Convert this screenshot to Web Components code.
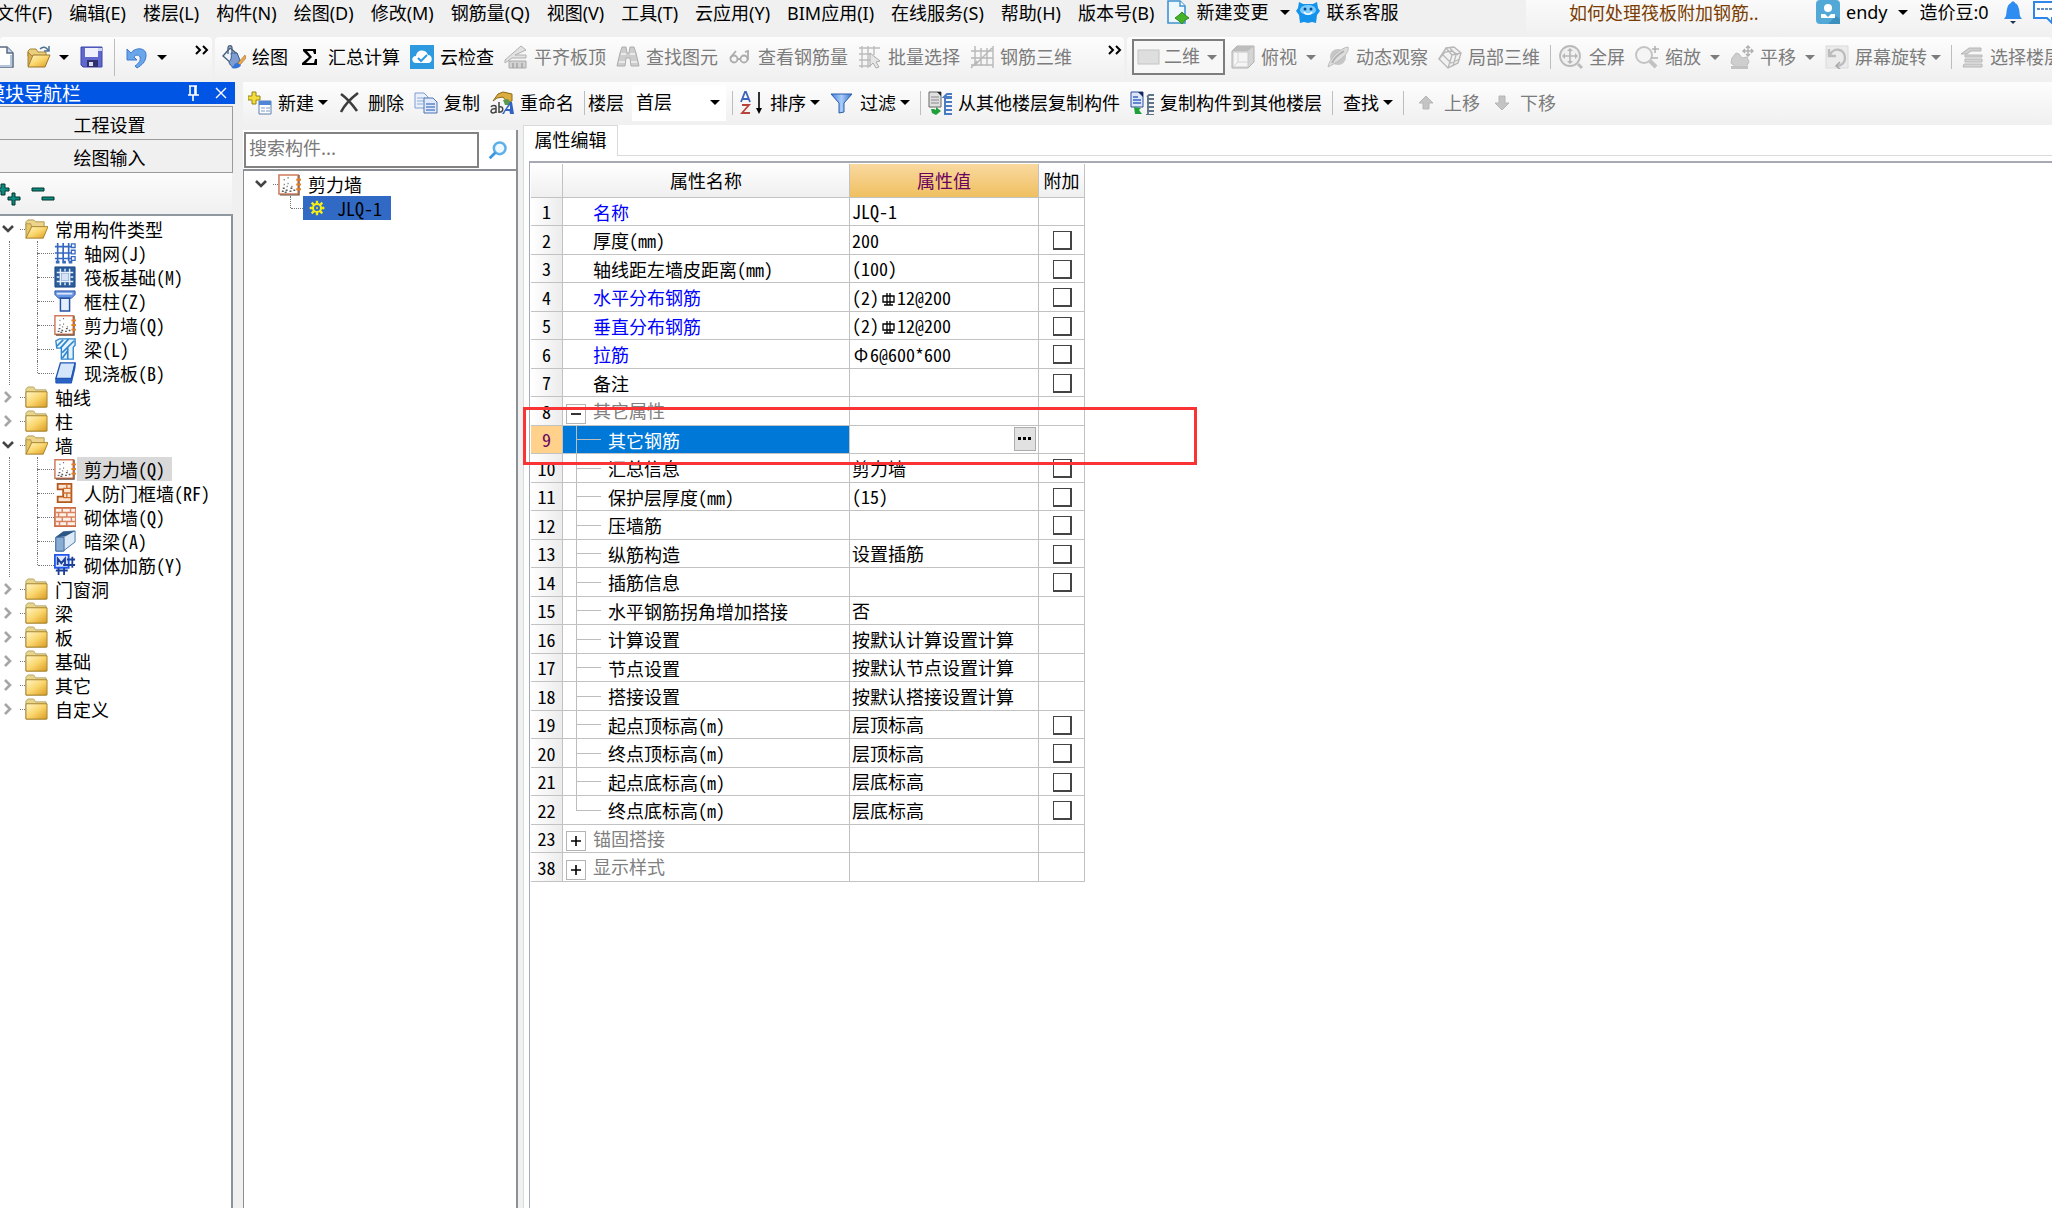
<!DOCTYPE html>
<html lang="zh-CN">
<head>
<meta charset="utf-8">
<title>属性编辑</title>
<style>
  html, body { margin: 0; height: 100%; overflow: hidden; background: #f0f0f0; }
  body { font: 18px/24px "Noto Sans", "Noto Sans CJK SC", sans-serif; color: #000; }
</style>
</head>
<body>
<app-window></app-window>
<script>
const ICONS = {
  page: `<path d="M3 2h12l6 6v14H3z" fill="#fff" stroke="#5a6a80" stroke-width="1.5"/><path d="M15 2v6h6" fill="#c8d8ec" stroke="#5a6a80" stroke-width="1.5"/><path d="M19 10v11H8" fill="none" stroke="#b4c6da" stroke-width="2"/>`,
  open: `<path d="M1 6l2-2h6l2 3h8v4H1z" fill="#ead07c" stroke="#a88438"/><path d="M1 21V7l4 4" fill="#d8ad4a" stroke="#a88438"/><path d="M6 10h17l-5 12H1z" fill="url(#gold)" stroke="#9c7628"/><path d="M13 4c3-3 6-2 8 1m1-4v5h-5" fill="none" stroke="#4c7392" stroke-width="1.5"/>`,
  save: `<path d="M1 2h21v20H3l-2-2z" fill="#5f68cc" stroke="#3c44a8"/><path d="M5 3h13v9H5z" fill="#eef0fb"/><path d="M18 3h4v3h-4z" fill="#cdd2f5"/><path d="M7 15h11v7H7z" fill="#30306a"/><path d="M9 17h4v4H9z" fill="#d8dcf0"/>`,
  undo: `<path d="M6 8c4-6 16-6 15 3-.5 6-4 9-9 12l-2-2c4-3 6-6 5-9-1-3-5-2-6 0l3 3H2V4z" fill="#6aa6ea" stroke="#3f7acc"/>`,
  paint: `<path d="M1 11l7-8 7 6-6 9z" fill="#eef3f9" stroke="#48607f" stroke-width="1.4"/><path d="M6 9V3c0-3 4-3 4 0v6" fill="none" stroke="#48607f" stroke-width="1.3"/><path d="M9 8h6l3 7-6 8c-3-2-5-4-5-6 2-2 3-5 2-9z" fill="#7d9cd0" stroke="#3d5a92"/><path d="M23 10l-7 8 2 2 6-7z" fill="#e8a850" stroke="#a86820" stroke-width=".6"/><path d="M15 18c-4 0-2 4-6 5 5 1 9 0 10-3z" fill="#3173d8"/>`,
  sigma: `<path d="M5 4h13v5h-2l-1-3H9l5 6-6 6h8l1-4h2v6H4v-2l7-6-6-6z" fill="#000"/>`,
  cloud: `<rect width="24" height="24" fill="#2d9ae0"/><path d="M6 18c-5 0-5-7 0-7 1-7 10-7 12-1 5 0 5 8 0 8z" fill="#fff"/><path d="M8 13l3 3 6-6" fill="none" stroke="#2d9ae0" stroke-width="2"/>`,
  level: `<path d="M1 15L17 1l5 4-11 5H22v3H8l-7 5z" fill="#e2e2e2" stroke="#b0b0b0"/><path d="M5 23v-7h17v7z" fill="#d2d2d2" stroke="#aaa"/><path d="M9 23v-5m4 5v-5m5 5v-5" stroke="#a4a4a4" stroke-width="1.5"/>`,
  binoc: `<path d="M4 8l2-6h4l1 6h2l1-6h4l2 6 3 13h-8l-1-8h-4l-1 8H1z" fill="#cdcdcd" stroke="#aeaeae"/><path d="M5 9h5M14 9h5M3 17h6M15 17h6" stroke="#f3f3f3" stroke-width="1.5"/>`,
  glasses: `<g fill="none" stroke="#ababab" stroke-width="1.8"><circle cx="6" cy="14" r="3.5"/><circle cx="16" cy="14" r="3.5"/><path d="M9 14h3M2 13l6-7M20 15V6l-3 1"/></g>`,
  batch: `<g fill="none" stroke="#bcbcbc" stroke-width="1.4"><path d="M1 3h21M1 9h12M1 15h12M1 21h12M4 1v22M10 1v22M16 1v9"/></g><path d="M12 8l10 8-4 1 3 5-3 1-3-5-3 3z" fill="#e6e6e6" stroke="#ababab"/>`,
  mesh: `<g fill="none" stroke="#b8b8b8" stroke-width="1.4"><path d="M5 1v20M11 3v18M17 3v18M23 1v22M1 6h22M1 13h22M1 20h22M5 20L22 3M1 23l6-7"/></g>`,
  flat: `<rect x="1" y="5" width="21" height="14" fill="#dedede" stroke="#c4c4c4"/>`,
  cube: `<path d="M1 6l5-5h17v16l-6 6H1z" fill="#d4d4d4" stroke="#b0b0b0"/><path d="M1 6l5-5h17l-6 5z" fill="#bdbdbd"/><path d="M2 7h15v15H2z" fill="#f5f5f5" stroke="#c8c8c8"/><path d="M7 7v10m0 0h10M7 17l-5 5" stroke="#d4d4d4"/>`,
  orbit: `<circle cx="12" cy="12" r="8" fill="#c6c6c6"/><path d="M2 22C3 14 14 3 22 2c2 6-8 14-20 20z" fill="#dedede" stroke="#bcbcbc"/><path d="M6 18c2-5 7-9 12-12" fill="none" stroke="#b0b0b0" stroke-width="2"/>`,
  part: `<path d="M1 14L8 3l8-1 7 6-3 10-10 5z" fill="#f2f2f2" stroke="#b8b8b8" stroke-width="1.4"/><path d="M8 3l6 7 9-2M14 10l-4 13M4 9l9 9 9-4M12 3l6 7-3 11M1 14l6-7 7-1 6 4" fill="none" stroke="#b8b8b8" stroke-width="1.3"/>`,
  full: `<circle cx="11" cy="11" r="10" fill="#f0f0f0" stroke="#bababa" stroke-width="1.8"/><path d="M11 3l3 3H8zM11 19l3-3H8zM3 11l3-3v6zM19 11l-3-3v6z" fill="#b6b6b6"/><path d="M11 6v10M6 11h10" stroke="#b6b6b6" stroke-width="1.6"/><path d="M19 19l4 4" stroke="#bcbcbc" stroke-width="3"/>`,
  zoom: `<circle cx="9" cy="10" r="8" fill="#f5f5f5" stroke="#c4c4c4" stroke-width="2"/><path d="M15 16l6 6" stroke="#c2c2c2" stroke-width="4"/><path d="M20 1v7m-3-4h7M16 13h7" stroke="#b2b2b2" stroke-width="1.6"/>`,
  pan: `<path d="M2 13l4-5 3 1 3 4 5-1 2 5-3 5H6l-5-4z" fill="#cecece" stroke="#bcbcbc"/><path d="M1 21h17v3H1z" fill="#c2c2c2"/><path d="M18 1v10m-5-5h10M16 3l2-2 2 2M16 9l2 2 2-2M21 4l2 2-2 2M15 4l-2 2 2 2" fill="none" stroke="#b0b0b0" stroke-width="1.4"/>`,
  rotate: `<path d="M1 1h22v22H1z" fill="#ebebeb" stroke="#dadada"/><path d="M5 10c3-8 15-7 15 3 0 5-4 8-8 8M4 4v7h7" fill="none" stroke="#bcbcbc" stroke-width="2.4"/><path d="M15 17l-4 4 4 3" fill="none" stroke="#a8a8a8" stroke-width="1.5"/>`,
  floors: `<path d="M1 9l8-6h12v3H11L7 9z" fill="#d0d0d0" stroke="#b6b6b6"/><path d="M5 10h17v2H5zM5 14h17v3H5zM4 19h18v3H3z" fill="#d4d4d4" stroke="#b8b8b8"/>`,
  create: `<path d="M4 1h4v4h4v4H8v4H4V9H0V5h4z" fill="#f3dc3c" stroke="#93841c"/><path d="M11 10h12v13H11z" fill="#fff" stroke="#5f7fae"/><path d="M11 10h12v4H11z" fill="#4f86d8"/><path d="M13 17h4m1 0h4M13 20h4m1 0h4" stroke="#a9bddd" stroke-width="1.6"/>`,
  remove: `<path d="M3 3c7 5 11 10 16 17M20 2C12 8 7 13 3 21" fill="none" stroke="#3c3c3c" stroke-width="2.6"/>`,
  copy: `<path d="M1 2h9l4 4v11H1z" fill="#eaf1fb" stroke="#7e9dcd"/><path d="M3 7h8M3 10h8M3 13h6" stroke="#8facd8"/><path d="M10 7h9l4 4v11H10z" fill="#e0eafa" stroke="#4e73b2"/><path d="M12 13h9M12 16h9M12 19h9" stroke="#5f86c8" stroke-width="1.4"/>`,
  rename: `<path d="M3 10l5-7 5-2 9 2v7l-5 1-4-5-6 1z" fill="#dcae42" stroke="#8d6818"/><path d="M13 9l5-1 4 6h-7z" fill="#5a9a4a"/><path d="M1 16c1-2 5-2 5 0v6m0-4c-6-1-6 4-3 4 1 0 3-1 3-2M9 11v11m0-6c5-2 5 6 0 5" fill="none" stroke="#444" stroke-width="1.5"/><path d="M12 23l8-12h2l2 12h-4l-.5-3h-4L14 23zm5-5h3v-4z" fill="#2f62c4"/>`,
  sort: `<path d="M1 11L5 1h1l4 10M3 8h6" fill="none" stroke="#3d64b8" stroke-width="1.8"/><path d="M2 14h7L2 22h8" fill="none" stroke="#b8423c" stroke-width="1.8"/><path d="M19 1v20" stroke="#000" stroke-width="1.6"/><path d="M16 17h6l-3 6z" fill="#000"/>`,
  filter: `<path d="M1 3h21l-8 9v9l-5 1V12z" fill="url(#blue)" stroke="#2c5ba8"/>`,
  copyFrom: `<path d="M1 1h12v15H1z" fill="#e0e0e0" stroke="#666"/><path d="M9 1h4v4z" fill="#222"/><path d="M3 6h8M3 9h8M3 12h8" stroke="#888"/><path d="M3 18h3l2 1v-3l5 4-5 4-4-2z" fill="#1fa03a"/><path d="M24 3h-5l-3 3h8M24 7h-7M24 11h-7M24 15h-7M24 19h-7M24 23h-8M17 5v17" fill="none" stroke="#4a7cc4" stroke-width="2"/>`,
  copyTo: `<path d="M1 1h12v15H1z" fill="#dbe6fa" stroke="#2c4ea0"/><path d="M8 1h5v5z" fill="#16265a"/><path d="M3 6h5M3 9h8M3 12h8" stroke="#3c64c0" stroke-width="1.4"/><path d="M4 16l7 1-2 2 3 4H5z" fill="#1fa03a"/><path d="M24 4h-5l-2 2M24 8h-7M24 12h-7M24 16h-7M24 20h-7M24 24h-8M18 6v17" fill="none" stroke="#5f7486" stroke-width="1.8"/>`,
  up: `<path d="M12 5l7 7h-4v6H9v-6H5z" fill="#c4c4c4" stroke="#b6b6b6"/>`,
  down: `<path d="M12 19l7-7h-4V5H9v7H5z" fill="#c4c4c4" stroke="#b6b6b6"/>`,
  change: `<path d="M2 1h12l5 5v17H2z" fill="#eef7fd" stroke="#3f93cf" stroke-width="1.6"/><path d="M14 1v5h5" fill="#fff" stroke="#3f93cf" stroke-width="1.4"/><path d="M16 12l3 3 4 3-4 2-3 4-3-3-4-3 4-3z" fill="#45b22a" stroke="#2f8a1c"/>`,
  robot: `<path d="M3 2l4 2h10l4-2 1 6 2 3-3 4-1 8-4-1-4 1-4-1-4 1-1-8-3-4 2-3z" fill="#1593ea"/><ellipse cx="12" cy="10" rx="8" ry="5" fill="#7cccff"/><circle cx="9" cy="9" r="1.5" fill="#084a8c"/><circle cx="15" cy="9" r="1.5" fill="#084a8c"/><path d="M8 12c2 3 6 3 8 0" fill="none" stroke="#fff" stroke-width="1.6"/>`,
  avatar: `<rect width="24" height="24" rx="4" fill="#52a9d8"/><path d="M12 24l8-8 4 3v5z" fill="#3d8fbe"/><circle cx="12" cy="8" r="4" fill="#fff"/><path d="M5 18v-4h4l3 3 3-3h4v4z" fill="#fff"/>`,
  bell: `<path d="M3 19c3-3 2-6 3-10 1-4 2-5 4-6 0-2 4-2 4 0 2 1 3 2 4 6 1 4 0 7 3 10z" fill="#2f8cf0"/><path d="M9 21h6l-3 3z" fill="#20364c"/>`,
  chat: `<path d="M2 2h22v16h-4v5l-5-5H2z" fill="#fff" stroke="#2f86ea" stroke-width="2"/><path d="M5 9h18" stroke="#2f6ab0" stroke-width="1.6" stroke-dasharray="3 1"/>`,
  search: `<circle cx="14" cy="10" r="7" fill="#eef8ff" stroke="#5cb0ea" stroke-width="3"/><path d="M9 15l-7 7" stroke="#3d97dd" stroke-width="3.4"/>`,
  folder: `<path d="M1 3l2-2h6l2 3h11v18H1z" fill="#e6d68c" stroke="#b8a46c"/><path d="M1 6h22v16H1z" fill="url(#gold)" stroke="#a5822e"/>`,
  folderOpen: `<path d="M1 4l2-2h6l2 2h9v8H1z" fill="#ecd58a" stroke="#b09654"/><path d="M1 21V6h5l1 4z" fill="#e8c766" stroke="#b09654"/><path d="M7 9h17l-5 12H1z" fill="url(#gold)" stroke="#a5822e"/>`,
  axis: `<path d="M4 1v20M10 1v20M16 1v20M1 5h18M1 12h18M1 18h18" stroke="#3568c0" stroke-width="1.8"/><path d="M19 2h4v4h-4zM19 9h4v4h-4zM19 16h4v4h-4z" fill="#fff" stroke="#3568c0" stroke-width="1.4"/><path d="M2 22h4m3 0h4m3 0h4" stroke="#3568c0" stroke-width="3"/>`,
  raft: `<path d="M1 1h22v22H1z" fill="#2b5c9c" stroke="#1d4a86"/><path d="M7 3v18M17 3v18M3 7h18M3 17h18" stroke="#e6effa" stroke-width="1.6"/><path d="M8 8h8v8H8z" fill="#d4e4f6"/><path d="M12 3v3M12 18v3M3 12h3M18 12h3" stroke="#b8d0ec" stroke-width="2"/>`,
  column: `<path d="M1 1h22v4l-4 4H5L1 5z" fill="#6a95e2" stroke="#2450a6"/><path d="M3 4h17" stroke="#dbe7fb" stroke-width="2"/><path d="M7 9h10v14H7z" fill="#e4eefc" stroke="#2450a6" stroke-width="1.6"/>`,
  wall: `<path d="M1 2h20v20H1z" fill="#fff" stroke="#d07a5a" stroke-width="1.6"/><path d="M22 2v21H2" fill="none" stroke="#6b4a3a" stroke-width="1.2"/><path d="M19 7h5M19 12h5M19 17h5" stroke="#e48020" stroke-width="2"/><path d="M6 7h1M10 5h1M6 12h1M10 11h1M5 16h2M9 14h1M13 16h2M4 19h2M8 18h2M12 19h2M16 18h2M7 20h2M14 14h1" stroke="#5a5a5a" stroke-width="1.5"/>`,
  beam: `<path d="M2 3l4-2h17v7l-2 2v13H8V11H3z" fill="#e5f2fc" stroke="#2f86cc" stroke-width="1.5"/><path d="M3 9l7-7M7 11l9-10M9 16L22 3M9 22l6-8M15 10v13" stroke="#2f86cc" stroke-width="1.8"/>`,
  slab: `<path d="M7 1h16l-4 17H2z" fill="#d5e6fb" stroke="#1f55b8" stroke-width="1.5"/><path d="M2 18h17v5H2zM19 18l4-17v5l-4 17" fill="#2a63c2" stroke="#1f55b8"/>`,
  doorwall: `<path d="M4 2h15v20H4v-6h6V8H4z" fill="#fbe6d2" stroke="#b5581c" stroke-width="2"/><path d="M10 7h9M10 12h9M10 17h9M14 2v5M14 12v5" stroke="#d07030" stroke-width="1.5"/>`,
  brick: `<path d="M1 2h23v20H1z" fill="#fdf1ea" stroke="#cc6a40" stroke-width="1.8"/><path d="M1 7h23M1 12h23M1 17h23M9 2v5M18 2v5M5 7v5M14 7v5M9 12v5M19 12v5M6 17v5M14 17v5" stroke="#d98460" stroke-width="1.6"/>`,
  hidden: `<path d="M2 8l8-6 13-1v12l-13 10H2z" fill="#dce9f6" stroke="#3d6ea6"/><path d="M2 8l8-6 13-1-11 6z" fill="#2c5684"/><path d="M2 8h9v15H2z" fill="#88acd2" stroke="#3a68a0"/>`,
  rebar: `<path d="M1 1h15v14H1z" fill="#dfe7ff" stroke="#1f58ec" stroke-width="2"/><path d="M4 12V5l4 5 4-5v7M10 12h13M14 6h9M20 3v12M2 18h13M5 15v8M11 15v8" fill="none" stroke="#1c3f98" stroke-width="2"/>`,
  gear: `<path d="M12 1v22M1 12h22M4 4l16 16M20 4L4 20" stroke="#f5ee14" stroke-width="3.4"/><circle cx="12" cy="12" r="6" fill="#316ac5" stroke="#f5ee14" stroke-width="3"/><circle cx="12" cy="12" r="1.5" fill="#f5ee14"/>`,
};
const icon = (name, size = 24) => `<svg width="${size}" height="${size}" viewBox="0 0 24 24" aria-hidden="true"><defs><linearGradient id="gold" x1="0" y1="0" x2="1" y2="1"><stop offset="0" stop-color="#fff6c8"/><stop offset=".5" stop-color="#fad66c"/><stop offset="1" stop-color="#d99a20"/></linearGradient><linearGradient id="blue"><stop offset="0" stop-color="#3f7fe0"/><stop offset=".5" stop-color="#a9cdfa"/><stop offset="1" stop-color="#3570d0"/></linearGradient></defs>${ICONS[name]}</svg>`;

const define = (tag, render) => customElements.define(tag, class extends HTMLElement {
  connectedCallback() {
    if (this.shadowRoot) return;
    this.attachShadow({ mode: 'open' }).innerHTML = render(this);
  }
});

/* A toolbar command: icon, label from the slot, optional drop arrow. */
define('tool-button', el => `
<style>
  :host { display: block; flex: none; }
  button { display: flex; align-items: center; gap: 6px; border: 0; padding: 0; background: none; font: inherit; color: inherit; white-space: nowrap; height: 32px; }
  button:disabled { color: #7c7c7c; }
  svg { display: block; flex: none; }
  i { border: 5px solid transparent; border-top-color: currentColor; border-bottom: 0; margin-left: var(--arrow-gap, 3px); }
  .tight i { margin-left: -2px; }
  .bare { gap: 0; }
</style>
<button type="button" class="${el.getAttribute('drop') || ''} ${el.textContent ? '' : 'bare'}" ${el.hasAttribute('off') ? 'disabled' : ''} ${el.title ? `aria-label="${el.title}"` : ''}>
  ${el.hasAttribute('icon') ? icon(el.getAttribute('icon')) : ''}<slot></slot>${el.hasAttribute('drop') ? '<i></i>' : ''}
</button>`);

define('tool-rule', () => `<style>:host { display: block; flex: none; width: 1px; height: var(--rule, 24px); background: #bdbdbd; }</style>`);

define('tool-more', () => `
<style>:host { display: block; flex: none; align-self: flex-start; } button { border: 0; padding: 0; background: none; display: block; }</style>
<button type="button" aria-label="更多"><svg width="14" height="10" viewBox="0 0 14 10"><path d="M1 1l4 4-4 4M8 1l4 4-4 4" fill="none" stroke="#000" stroke-width="2"/></svg></button>`);

define('tool-combo', el => `
<style>
  :host { display: flex; flex: none; align-items: center; box-sizing: border-box; height: 36px; background: #fff; }
  :host([off]) { background: #f7f7f7; border: 2px solid #7d7d7d; color: #7c7c7c; }
  svg { display: block; margin: 0 3px; }
  select { appearance: none; border: 0; background: none; font: inherit; color: inherit; opacity: 1; width: var(--w); height: 32px; padding: 0 0 2px 4px; margin: 0; }
  :host([off]) select { padding: 0 0 2px; }
  i { border: 5px solid transparent; border-top-color: currentColor; border-bottom: 0; margin: 0 6px 0 3px; }
</style>
${el.hasAttribute('icon') ? icon(el.getAttribute('icon')) : ''}
<select aria-label="${el.title}" ${el.hasAttribute('off') ? 'disabled' : ''}><option>${el.getAttribute('value')}</option></select><i></i>`);

define('menu-bar', () => `
<style>
  :host { display: flex; height: 37px; align-items: flex-start; }
  nav { display: flex; gap: 17px; margin-left: -4px; flex: none; }
  button { border: 0; padding: 0; background: none; font: inherit; white-space: nowrap; height: 26px; }
  .extra { display: flex; flex: 1; gap: 15px; margin-left: 12px; --arrow-gap: 6px; margin-top: -4px; }
  .extra .help { margin-left: -9px; }
  .right { display: flex; flex: none; width: 526px; height: 37px; box-sizing: border-box; background: linear-gradient(#fafafa, #f0f0f0); padding-left: 43px; }
  a { color: #7a3c00; text-decoration: none; width: 247px; line-height: 26px; flex: none; }
  .user { display: flex; gap: 12px; margin-top: -4px; --arrow-gap: 4px; }
  .chat { margin-left: -5px; }
</style>
<nav>${['文件(F)', '编辑(E)', '楼层(L)', '构件(N)', '绘图(D)', '修改(M)', '钢筋量(Q)', '视图(V)', '工具(T)', '云应用(Y)', 'BIM应用(I)', '在线服务(S)', '帮助(H)', '版本号(B)'].map(t => `<button type="button">${t}</button>`).join('')}</nav>
<div class="extra"><tool-button icon="change" drop="wide">新建变更</tool-button><tool-button class="help" icon="robot">联系客服</tool-button></div>
<div class="right"><a href="#">如何处理筏板附加钢筋..</a>
<div class="user"><tool-button icon="avatar" drop="wide">endy</tool-button><tool-button>造价豆:0</tool-button><tool-button icon="bell" title="通知"></tool-button><tool-button class="chat" icon="chat" title="消息"></tool-button></div></div>`);

define('main-toolbar', () => `
<style>
  :host { display: flex; height: 45px; gap: 3px; background: #f0f0f0; }
  .bar { display: flex; align-items: center; gap: 10px; height: 42px; flex: none; background: linear-gradient(#fdfdfd, #f0f0f0); box-sizing: border-box; border-radius: 4px; padding-bottom: 2px; }
  .file { width: 212px; gap: 11px; --arrow-gap: 8px; --rule: 37px; }
  .file > :first-child { margin-left: -8px; }
  .file tool-rule { margin: 0 -1px; }
  .draw { width: 909px; padding-left: 7px; }
  .view { flex: 1; padding-left: 5px; --arrow-gap: 3px; overflow: hidden; }
  .combo { margin-right: -4px; --w: 40px; }
  tool-more { margin: 6px 0 0 auto; }
  .file tool-more { margin-right: 3px; }
  .draw tool-more { margin-right: 2px; }
  .rule { margin-right: -2px; }
</style>
<div class="bar file"><tool-button icon="page" title="新建"></tool-button><tool-button icon="open" drop="wide" title="打开"></tool-button><tool-button icon="save" title="保存"></tool-button><tool-rule></tool-rule><tool-button icon="undo" drop="wide" title="撤销"></tool-button><tool-more></tool-more></div>
<div class="bar draw"><tool-button icon="paint">绘图</tool-button><tool-button icon="sigma">汇总计算</tool-button><tool-button icon="cloud">云检查</tool-button><tool-button off icon="level">平齐板顶</tool-button><tool-button off icon="binoc">查找图元</tool-button><tool-button off icon="glasses">查看钢筋量</tool-button><tool-button off icon="batch">批量选择</tool-button><tool-button off icon="mesh">钢筋三维</tool-button><tool-more></tool-more></div>
<div class="bar view"><tool-combo off class="combo" icon="flat" value="二维" title="视图模式"></tool-combo><tool-button off icon="cube" drop="wide">俯视</tool-button><tool-button off icon="orbit">动态观察</tool-button><tool-button off icon="part">局部三维</tool-button><tool-rule class="rule"></tool-rule><tool-button off icon="full">全屏</tool-button><tool-button off icon="zoom" drop="wide">缩放</tool-button><tool-button off icon="pan" drop="wide">平移</tool-button><tool-button off icon="rotate" drop="tight">屏幕旋转</tool-button><tool-rule class="rule"></tool-rule><tool-button off icon="floors">选择楼层</tool-button></div>`);

define('part-toolbar', () => `
<style>
  :host { display: flex; align-items: center; gap: 10px; height: 42px; padding: 0 0 2px 5px; box-sizing: border-box; height: 43px; background: linear-gradient(#fdfdfd, #f0f0f0); flex: none; }
  .floor { margin-left: -7px; }
  .combo { --w: 75px; margin: 0 -4px 0 -2px; }
  .near { margin-right: -3px; }
</style>
<tool-button icon="create" drop="tight">新建</tool-button><tool-button icon="remove">删除</tool-button><tool-button icon="copy">复制</tool-button><tool-button icon="rename">重命名</tool-button><tool-rule></tool-rule><tool-button class="floor">楼层</tool-button><tool-combo class="combo" value="首层" title="楼层"></tool-combo><tool-rule class="near"></tool-rule><tool-button icon="sort" drop="tight">排序</tool-button><tool-button icon="filter" drop="tight">过滤</tool-button><tool-rule class="near"></tool-rule><tool-button icon="copyFrom">从其他楼层复制构件</tool-button><tool-button icon="copyTo">复制构件到其他楼层</tool-button><tool-rule></tool-rule><tool-button drop="tight">查找</tool-button><tool-rule></tool-rule><tool-button off icon="up">上移</tool-button><tool-button off icon="down">下移</tool-button>`);

/* One 24px line of a tree; level 0 is a folder, level 1 a leaf on dotted connectors. */
define('tree-row', el => {
  const leaf = el.hasAttribute('leaf'), open = el.hasAttribute('open'), last = el.hasAttribute('last');
  return `
<style>
  :host { display: flex; align-items: center; height: 24px; font-family: "Noto Sans Mono CJK SC", "Noto Sans CJK SC", monospace; white-space: nowrap; }
  svg { display: block; flex: none; }
  .chev { width: 18px; }
  .dots { width: 5px; border-top: 1px dotted #777; margin-left: 2px; }
  .rail { width: 9px; align-self: stretch; border-right: 1px dotted #777; visibility: var(--rail, visible); }
  .stem { width: 28px; align-self: stretch; display: grid; grid-template-rows: 12px 12px; }
  .stem b { border-right: 1px dotted #777; }
  .stem.last b + b { border: 0; }
  .arm { width: 16px; border-top: 1px dotted #777; }
  span { padding: 0 7px; line-height: 24px; }
  :host([leaf]) span { margin-left: 1px; }
  :host([selected]) span { background: #d9d9d9; }
  :host([active]) span { background: #316ac5; padding: 0 9px 0 12px; margin: 0; }
  :host([active]) svg { background: #316ac5; padding: 4px 0 4px 6px; }
  :host([active]) .arm { width: 12px; }
</style>
${leaf ? `<div class="rail"></div><div class="stem ${last ? 'last' : ''}"><b></b><b></b></div><div class="arm"></div>`
       : `<svg class="chev" width="18" height="24" viewBox="0 0 18 24"><path d="${open ? 'M3 9l5 5 5-5' : 'M5 7l5 5-5 5'}" fill="none" stroke="${open ? '#444' : '#a6a6a6'}" stroke-width="2.6"/></svg><div class="dots"></div>`}
${icon(el.getAttribute('icon') || (open ? 'folderOpen' : 'folder'), leaf ? (el.hasAttribute('active') ? 16 : 22) : 23)}<span><slot></slot></span>`;
});

define('module-nav', () => `
<style>
  :host { display: flex; flex-direction: column; width: 235px; flex: none; overflow: hidden; }
  header { display: flex; align-items: center; height: 22px; background: #0055e5; color: #fff; font-size: 19px; line-height: 22px; font-family: "Noto Sans CJK SC", sans-serif; }
  h2 { font: inherit; margin: 0 auto 0 -14px; }
  header button { border: 0; background: none; padding: 0; margin-right: 4px; width: 20px; height: 20px; }
  header button:first-of-type { margin-right: 8px; }
  .stack { display: grid; grid-auto-rows: 33px; margin: 2px 2px 0 0; border-top: 1px solid #9a9a9a; }
  .stack button { border: 0; border-right: 1px solid #9a9a9a; border-bottom: 1px solid #9a9a9a; background: #f0f0f0; font: inherit; font-family: "Noto Sans CJK SC", sans-serif; padding: 2px 13px 0 0; }
  .tools { height: 41px; margin-right: 3px; background: linear-gradient(#fcfcfc, #f0f0f0); display: flex; gap: 10px; align-items: center; }
  .tools button { border: 0; padding: 2px 0 0; background: none; height: 26px; }
  .tree { flex: 1; margin-right: 2px; border-top: 2px solid #9098a0; border-right: 2px solid #8b929a; background: #fff; padding-top: 1px; }
</style>
<header><h2>模块导航栏</h2>
<button type="button" aria-label="固定"><svg width="20" height="20" viewBox="0 0 20 20"><path d="M6 3h8M7 3v9h5V3M13 3v9M5 12h11M10 12v6" fill="none" stroke="#fff" stroke-width="1.6"/></svg></button>
<button type="button" aria-label="关闭"><svg width="20" height="20" viewBox="0 0 20 20"><path d="M5 5l10 10M15 5L5 15" stroke="#fff" stroke-width="1.4"/></svg></button></header>
<div class="stack"><button type="button">工程设置</button><button type="button">绘图输入</button></div>
<div class="tools"><button type="button" aria-label="全部展开"><svg width="21" height="24" viewBox="0 0 21 24"><path d="M1 1h4v4h4v3H5v4H1V8h-4V5h4zM12 10h3v4h5v3h-5v5h-3v-5H8v-3h4z" fill="#0a8a80" stroke="#04342c"/></svg></button><button type="button" aria-label="全部折叠"><svg width="25" height="24" viewBox="0 0 25 24"><path d="M1 5h12v3H1zM11 14h12v3H11z" fill="#0a8a80" stroke="#04342c"/></svg></button></div>
<div class="tree">
<tree-row open>常用构件类型</tree-row><tree-row leaf icon="axis">轴网(J)</tree-row><tree-row leaf icon="raft">筏板基础(M)</tree-row><tree-row leaf icon="column">框柱(Z)</tree-row><tree-row leaf icon="wall">剪力墙(Q)</tree-row><tree-row leaf icon="beam">梁(L)</tree-row><tree-row leaf last icon="slab">现浇板(B)</tree-row>
<tree-row>轴线</tree-row><tree-row>柱</tree-row><tree-row open>墙</tree-row>
<tree-row leaf selected icon="wall">剪力墙(Q)</tree-row><tree-row leaf icon="doorwall">人防门框墙(RF)</tree-row><tree-row leaf icon="brick">砌体墙(Q)</tree-row><tree-row leaf icon="hidden">暗梁(A)</tree-row><tree-row leaf last icon="rebar">砌体加筋(Y)</tree-row>
<tree-row>门窗洞</tree-row><tree-row>梁</tree-row><tree-row>板</tree-row><tree-row>基础</tree-row><tree-row>其它</tree-row><tree-row>自定义</tree-row>
</div>`);

define('part-list', () => `
<style>
  :host { display: flex; flex-direction: column; width: 275px; flex: none; box-sizing: border-box; border-right: 2px solid #8b9096; background: #fff; margin-top: 5px; }
  form { display: flex; align-items: center; padding: 2px 0 0 1px; margin: 0; }
  input { box-sizing: border-box; width: 235px; height: 36px; border: 2px solid #828282; padding: 0 3px 6px; font: inherit; font-family: "Noto Sans CJK SC", sans-serif; background: #fff; }
  input::placeholder { color: #7a7a7a; opacity: 1; }
  button { border: 0; background: none; padding: 0; margin-left: 9px; height: 20px; }
  .tree { flex: 1; border: 2px solid #8b9096; border-width: 2px 0 0 1px; margin-top: 1px; padding: 1px 0 0 9px; --rail: hidden; }
</style>
<form><input type="text" aria-label="搜索构件" placeholder="搜索构件..."><button type="button" aria-label="搜索">${icon('search', 20)}</button></form>
<div class="tree"><tree-row open icon="wall">剪力墙</tree-row><tree-row leaf last active icon="gear">JLQ-1</tree-row></div>`);

const rebarMark = '<svg width="18" height="18" viewBox="0 0 18 18" role="img" aria-label="HRB400"><path d="M4 6h11v6H4zM8 3v12M11 3v12M5 15h9" fill="none" stroke="#000" stroke-width="1.3"/></svg>';
const ROWS = [
  [1, '名称', 'JLQ-1', 0, 'key'], [2, '厚度(mm)', '200', 1], [3, '轴线距左墙皮距离(mm)', '(100)', 1],
  [4, '水平分布钢筋', `(2)${rebarMark}12@200`, 1, 'key'], [5, '垂直分布钢筋', `(2)${rebarMark}12@200`, 1, 'key'],
  [6, '拉筋', '<span class="dia">Φ</span>6@600*600', 1, 'key'], [7, '备注', '', 1], [8, '其它属性', '', 0, 'group'],
  [9, '其它钢筋', '<button type="button" class="more" aria-label="编辑"><svg width="16" height="4" viewBox="0 0 16 4"><path d="M1 0h3v3H1zM6 0h3v3H6zM11 0h3v3h-3z"/></svg></button>', 0, 'sub current'],
  [10, '汇总信息', '剪力墙', 1, 'sub'], [11, '保护层厚度(mm)', '(15)', 1, 'sub'], [12, '压墙筋', '', 1, 'sub'],
  [13, '纵筋构造', '设置插筋', 1, 'sub'], [14, '插筋信息', '', 1, 'sub'], [15, '水平钢筋拐角增加搭接', '否', 0, 'sub'],
  [16, '计算设置', '按默认计算设置计算', 0, 'sub'], [17, '节点设置', '按默认节点设置计算', 0, 'sub'], [18, '搭接设置', '按默认搭接设置计算', 0, 'sub'],
  [19, '起点顶标高(m)', '层顶标高', 1, 'sub'], [20, '终点顶标高(m)', '层顶标高', 1, 'sub'], [21, '起点底标高(m)', '层底标高', 1, 'sub'],
  [22, '终点底标高(m)', '层底标高', 1, 'sub last'], [23, '锚固搭接', '', 0, 'group'], [38, '显示样式', '', 0, 'group'],
];

define('property-grid', () => `
<style>
  :host { display: block; font-family: "Noto Sans Mono CJK SC", "Noto Sans CJK SC", monospace; }
  table { border-collapse: separate; border-spacing: 0; table-layout: fixed; width: 554px; }
  th, td { box-sizing: border-box; padding: 0; border: 0 solid #c2c2c2; border-width: 0 1px 1px 0; font-weight: 400; white-space: nowrap; line-height: 24px; overflow: hidden; }
  thead th { height: 34px; padding-bottom: 2px; background: linear-gradient(#fff, #efefef); }
  thead .value { background: linear-gradient(#f9d9a0, #f0c060); color: #6a0060; }
  tbody tr { height: 28px; }
  tbody tr:nth-child(even) { height: 29px; }
  tbody th { background: linear-gradient(90deg, #fff, #ececec); text-align: center; padding-bottom: 1px; }
  .name { padding-left: 30px; }
  .key .name { color: #00f; }
  .group .name { color: #808080; padding-left: 3px; }
  .group .name button { width: 20px; height: 20px; box-sizing: border-box; border: 1px solid #b4b4b4; background: #fff; padding: 0; margin-right: 7px; vertical-align: middle; }
  .group svg { display: block; margin: auto; }
  .sub .name { padding-left: 45px; background: linear-gradient(#bdbdbd, #bdbdbd) 13px 0 / 1px 100% no-repeat, linear-gradient(#bdbdbd, #bdbdbd) 13px 50% / 25px 1px no-repeat; }
  .last .name { background-size: 1px 50%, 25px 1px; }
  .current .name { background-color: #0078d7; color: #fff; }
  .current th { background: #ffd18a; color: #6a0060; }
  .val { padding: 0 0 1px 2px; }
  .val svg { vertical-align: -3px; }
  .dia { display: inline-block; width: 18px; text-align: center; }
  .more { display: flex; align-items: center; justify-content: center; margin: 0 2px 0 auto; width: 22px; height: 24px; box-sizing: border-box; border: 1px solid #adadad; background: #e1e1e1; padding: 0; }
  .more svg { flex: none; }
  input { appearance: none; display: block; margin: 1px 0 0 14px; width: 19px; height: 19px; border: 2px solid #444; border-width: 1px 2px 2px 1px; background: #fff; box-sizing: border-box; }
</style>
<table>
<colgroup><col style="width:32px"><col style="width:287px"><col style="width:189px"><col style="width:46px"></colgroup>
<thead><tr><th></th><th>属性名称</th><th class="value">属性值</th><th>附加</th></tr></thead>
<tbody>${ROWS.map(([n, name, value, tick, cls = '']) => `<tr class="${cls}"><th>${n}</th><td class="name">${cls === 'group' ? `<button type="button" aria-label="${n === 8 ? '折叠' : '展开'}"><svg width="12" height="12" viewBox="0 0 12 12"><path d="${n === 8 ? 'M1 6h10' : 'M1 6h10M6 1v10'}" stroke="#000" stroke-width="1.6"/></svg></button>` : ''}${name}</td><td class="val">${value}</td><td class="add">${tick ? `<input type="checkbox" aria-label="附加 ${name}">` : ''}</td></tr>`).join('')}</tbody>
</table>`);

define('property-panel', () => `
<style>
  :host { display: flex; flex-direction: column; flex: 1; min-width: 0; margin-left: 5px; background: #fff; position: relative; border-left: 1px solid #dadada; }
  .tabs { display: flex; height: 31px; }
  .tabs button { border: 1px solid #dadada; border-width: 1px 1px 0 0; background: #fff; font: inherit; font-family: "Noto Sans CJK SC", sans-serif; width: 94px; padding: 0 0 5px; box-sizing: border-box; }
  .tabs div { flex: 1; border-bottom: 1px solid #dadada; }
  .body { flex: 1; margin: 5px 0 0 5px; border: 2px solid #a6aab4; border-width: 2px 0 0 1px; padding: 1px 0 0 1px; }
  .mark { position: absolute; left: -1px; top: 282px; width: 674px; height: 58px; box-sizing: border-box; border: 3px solid #fa3434; pointer-events: none; }
</style>
<div class="tabs"><button type="button">属性编辑</button><div></div></div>
<div class="body"><property-grid></property-grid></div>
<div class="mark"></div>`);

define('app-window', () => `
<style>
  :host { display: flex; flex-direction: column; height: 100vh; overflow: hidden; }
  main { display: flex; flex: 1; min-height: 0; gap: 8px; }
  .work { display: flex; flex-direction: column; flex: 1; min-width: 0; }
  .cols { display: flex; flex: 1; min-height: 0; }
</style>
<menu-bar></menu-bar>
<main-toolbar></main-toolbar>
<main><module-nav></module-nav><div class="work"><part-toolbar></part-toolbar><div class="cols"><part-list></part-list><property-panel></property-panel></div></div></main>`);
</script>
</body>
</html>
